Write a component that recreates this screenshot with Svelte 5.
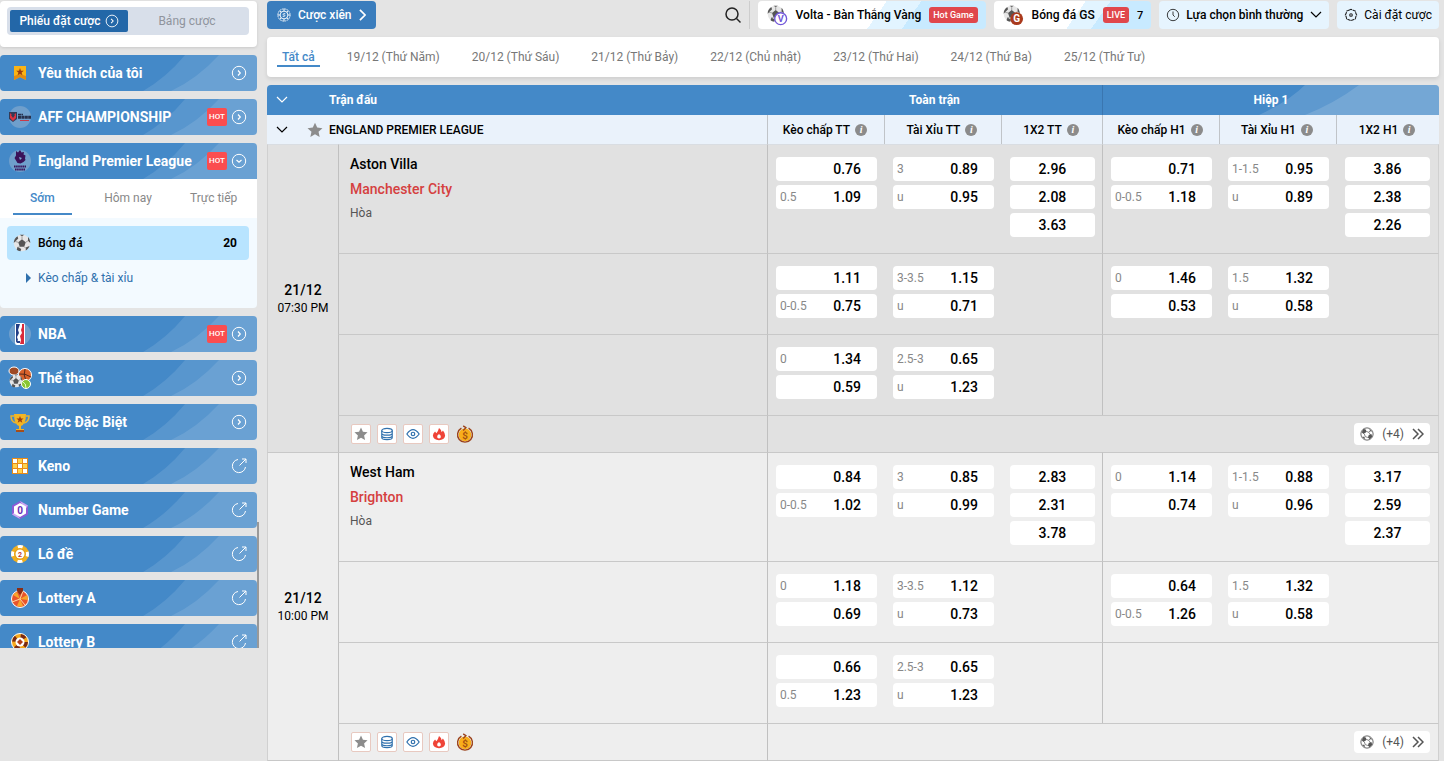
<script lang="ts">
	type Odd = [string, string];
	type Market = Odd[];

	const menuTop = [
		{ icon: 'bookmark', label: 'Yêu thích của tôi', end: 'right', hot: false },
		{ icon: 'aff', label: 'AFF CHAMPIONSHIP', end: 'right', hot: true },
		{ icon: 'epl', label: 'England Premier League', end: 'down', hot: true }
	];

	const menuRest = [
		{ icon: 'nba', label: 'NBA', end: 'right', hot: true },
		{ icon: 'sports', label: 'Thể thao', end: 'right', hot: false },
		{ icon: 'trophy', label: 'Cược Đặc Biệt', end: 'right', hot: false },
		{ icon: 'keno', label: 'Keno', end: 'out', hot: false },
		{ icon: 'number', label: 'Number Game', end: 'out', hot: false },
		{ icon: 'lode', label: 'Lô đề', end: 'out', hot: false },
		{ icon: 'lotteryA', label: 'Lottery A', end: 'out', hot: false },
		{ icon: 'lotteryB', label: 'Lottery B', end: 'out', hot: false }
	];

	const periods = ['Sớm', 'Hôm nay', 'Trực tiếp'];

	const dates = [
		'Tất cả',
		'19/12 (Thứ Năm)',
		'20/12 (Thứ Sáu)',
		'21/12 (Thứ Bảy)',
		'22/12 (Chủ nhật)',
		'23/12 (Thứ Hai)',
		'24/12 (Thứ Ba)',
		'25/12 (Thứ Tư)'
	];

	const columns = ['Kèo chấp TT', 'Tài Xỉu TT', '1X2 TT', 'Kèo chấp H1', 'Tài Xỉu H1', '1X2 H1'];

	const matches: { home: string; away: string; date: string; time: string; rows: Market[][] }[] = [
		{
			home: 'Aston Villa',
			away: 'Manchester City',
			date: '21/12',
			time: '07:30 PM',
			rows: [
				[
					[['', '0.76'], ['0.5', '1.09']],
					[['3', '0.89'], ['u', '0.95']],
					[['', '2.96'], ['', '2.08'], ['', '3.63']],
					[['', '0.71'], ['0-0.5', '1.18']],
					[['1-1.5', '0.95'], ['u', '0.89']],
					[['', '3.86'], ['', '2.38'], ['', '2.26']]
				],
				[
					[['', '1.11'], ['0-0.5', '0.75']],
					[['3-3.5', '1.15'], ['u', '0.71']],
					[],
					[['0', '1.46'], ['', '0.53']],
					[['1.5', '1.32'], ['u', '0.58']],
					[]
				],
				[[['0', '1.34'], ['', '0.59']], [['2.5-3', '0.65'], ['u', '1.23']], [], [], [], []]
			]
		},
		{
			home: 'West Ham',
			away: 'Brighton',
			date: '21/12',
			time: '10:00 PM',
			rows: [
				[
					[['', '0.84'], ['0-0.5', '1.02']],
					[['3', '0.85'], ['u', '0.99']],
					[['', '2.83'], ['', '2.31'], ['', '3.78']],
					[['0', '1.14'], ['', '0.74']],
					[['1-1.5', '0.88'], ['u', '0.96']],
					[['', '3.17'], ['', '2.59'], ['', '2.37']]
				],
				[
					[['0', '1.18'], ['', '0.69']],
					[['3-3.5', '1.12'], ['u', '0.73']],
					[],
					[['', '0.64'], ['0-0.5', '1.26']],
					[['1.5', '1.32'], ['u', '0.58']],
					[]
				],
				[[['', '0.66'], ['0.5', '1.23']], [['2.5-3', '0.65'], ['u', '1.23']], [], [], [], []]
			]
		}
	];

	let activePeriod = $state('Sớm');
	let activeDate = $state('Tất cả');
</script>

{#snippet ballShape()}
	<circle cx="12" cy="12" r="11" fill="#e6e6e6" />
	<path d="M12 7l5 4-2 6H9l-2-6zM1 12c0-4 2-7 5-9l1 3-4 4zM23 12l-3-3 0-5c2 2 3 5 3 8zM5 21l1-4 5 3-1 3c-2 0-4-1-5-2zM17 22l0-4 5-2c-1 3-3 5-5 6zM9 1h6l-3 2z" fill="#555" />
	<path d="M12 3v4M3 10l4 1M20 9l-3 2M15 17l2 2M9 17l-3 1" stroke="#888" fill="none" />
{/snippet}

{#snippet menuIcon(name: string)}
	<svg class="menu-icon" viewBox="0 0 24 24" aria-hidden="true">
		{#if name === 'bookmark'}
			<path d="M6 5h12v14l-6-3-6 3z" fill="#fbb415" />
			<path d="M6 15v4l6-3 6 3v-4l-6-2z" fill="#e28b12" />
			<path d="M12 7l1 2.700 2.800.100-2.200 1.800.800 2.700-2.400-1.500-2.400 1.500.800-2.700-2.200-1.800 2.800-.100z" fill="#9c3d10" />
		{:else if name === 'aff'}
			<circle cx="12" cy="12" r="11" fill="#6f9fcc" />
			<path d="M1 7h8v7l-4 3-4-3z" fill="#333b58" />
			<path d="M2 8l3 3 3-3v5l-3 3-3-3z" fill="#dd3340" />
			<path d="M3 10h4l-2 3z" fill="#333b58" />
			<path d="M10 9.500h5M10 11.500h13M10 13h13" stroke="#27304c" stroke-width="1.600" stroke-dasharray="3 .4" />
			<path d="M12 15.500h9" stroke="#c83a49" />
		{:else if name === 'epl'}
			<circle cx="12" cy="12" r="11" fill="#6f9fcc" />
			<path d="M8 2l2 1.500L12 1l1.500 2.500L16 3l-.5 2.500 2 1-.5 3 .5 1.500-2 2-3 1.500-3-.5L8 11.500 6.500 9 8 6.500z" fill="#3a1259" />
			<path d="M11 8l3 1-2 2z" fill="#7fa9d3" />
			<path d="M6 17.500h12M7 20.500h10" stroke="#3a1259" stroke-width="2" stroke-dasharray="1.600 .5" />
		{:else if name === 'nba'}
			<circle cx="12" cy="12" r="11" fill="#6f9fcc" />
			<rect x="7" y="1" width="10" height="22" rx="2" fill="#fff" />
			<path d="M8 2h4l-1 3-1 3 1 3-2 4 1 3-2 3z" fill="#233f86" />
			<path d="M14 2h2v20h-4l1-4-1-4 2-3-1-3 1-3z" fill="#d92a3b" />
			<path d="M9 20h3" stroke="#233f86" stroke-width="2" />
		{:else if name === 'sports'}
			<ellipse cx="6" cy="5" rx="5" ry="4" fill="#9e4a25" stroke="#fff" />
			<circle cx="17" cy="9" r="6.500" fill="#d9622b" stroke="#fff" />
			<path d="M11 8q6-1 12 3M17 3q-2 6 1 12" stroke="#54291b" fill="none" />
			<g transform="translate(1 8) scale(.58)">{@render ballShape()}</g>
			<circle cx="18" cy="18" r="4.500" fill="#87c532" stroke="#fff" />
			<path d="M15 16q3 1 3 6" stroke="#e8ffc0" fill="none" />
		{:else if name === 'trophy'}
			<path d="M6 6H3q0 6 5 7M18 6h3q0 6-5 7" stroke="#eab32d" stroke-width="1.500" fill="none" />
			<path d="M6 4h12q0 10-5 12v3h3v2H8v-2h3v-3Q6 14 6 4z" fill="#f4b522" />
			<path d="M8 20h8v2H8z" fill="#a64d18" />
			<path d="M12 6l1 2.500h2.500l-2 1.700.800 2.600-2.300-1.500-2.300 1.500.8-2.600-2-1.700H11z" fill="#9c3d10" />
		{:else if name === 'keno'}
			<rect x="4" y="4" width="16" height="16" fill="#e88c18" />
			{#each [5, 10, 15] as x, i}
				{#each [5, 10, 15] as y, j}
					<rect {x} {y} width="4" height="4" fill={(i + j) % 2 ? '#ffd34d' : '#fff'} />
				{/each}
			{/each}
		{:else if name === 'number'}
			<path d="M12 3l8 4.500v9L12 21l-8-4.500v-9z" fill="#8d5bd6" />
			<path d="M12 3l8 4.500-3 4.500zM4 16.500l4-3.500 4 8z" fill="#c9a9f2" />
			<path d="M12 5l6 3.500v7L12 19l-6-3.500v-7z" fill="#fff" />
			<text x="12" y="15.500" text-anchor="middle" font-size="10" font-weight="700" fill="#6b2fb5">0</text>
		{:else if name === 'lode'}
			<circle cx="12" cy="12" r="9" fill="#f0ae1f" />
			<circle cx="12" cy="12" r="7.500" fill="none" stroke="#fff" stroke-width="3" stroke-dasharray="5 6.780" stroke-dashoffset="2.500" />
			<circle cx="12" cy="12" r="5.500" fill="#e39c14" />
			<circle cx="12" cy="12" r="4.500" fill="#fff" />
			<text x="12" y="15" text-anchor="middle" font-size="7" font-weight="700" fill="#c0392b">2</text>
		{:else if name === 'lotteryA'}
			<circle cx="12" cy="13" r="8.500" fill="#e8542c" stroke="#fff" />
			<path d="M12 13L5 9a8 8 0 0 1 4-3zM12 13l7-4a8 8 0 0 1 1 5zM12 13l3 7a8 8 0 0 1-6 0z" fill="#f7a52b" />
			<path d="M12 13l-8 3M12 13l5 6M12 13l3-8" stroke="#ffd9a0" />
			<path d="M9 2h6v3l-3 4-3-4z" fill="#8a2d14" />
		{:else}
			<circle cx="12" cy="12" r="8.500" fill="#f6a81c" stroke="#fff" />
			<circle cx="12" cy="12" r="6" fill="none" stroke="#7a2b12" stroke-width="4" stroke-dasharray="4.700 4.720" />
			<circle cx="12" cy="12" r="4.500" fill="#fff" />
			<path d="M12 9l3 3-3 3-3-3z" fill="#b23c16" />
		{/if}
	</svg>
{/snippet}

{#snippet endIcon(kind: string)}
	<svg class="end-icon" viewBox="0 0 16 16" fill="none" stroke="currentColor" aria-hidden="true">
		{#if kind === 'out'}
			<path d="M7 1.500A6.600 6.600 0 1 0 14.500 9M8.500 7.500L15 1M11 1h4v4" />
		{:else}
			<circle cx="8" cy="8" r="6.700" />
			<path d={kind === 'down' ? 'M5.500 7L8 9.300 10.500 7' : 'M7 5.500L9.300 8 7 10.500'} stroke-width="1.200" />
		{/if}
	</svg>
{/snippet}

{#snippet chevron()}
	<svg class="chevron" viewBox="0 0 12 8" fill="none" stroke="currentColor" stroke-width="1.200" aria-hidden="true">
		<path d="M1 1l5 5 5-5" />
	</svg>
{/snippet}

{#snippet star()}
	<svg class="star" viewBox="0 0 24 24" fill="#8c8c8c" aria-hidden="true">
		<path d="M12 1l3.300 7.300 7.900.900-5.900 5.300 1.700 7.900-7-4-7 4 1.700-7.900L.8 9.200l7.900-.9z" />
	</svg>
{/snippet}

{#snippet menuItem(item: { icon: string; label: string; end: string; hot: boolean }, open: boolean)}
	<button class="menu-item" class:open>
		{@render menuIcon(item.icon)}
		<span class="menu-label">{item.label}</span>
		{#if item.hot}<span class="hot">HOT</span>{/if}
		{@render endIcon(item.end)}
	</button>
{/snippet}

<div class="page">
	<aside class="sidebar">
		<div class="slip-card">
			<div class="segmented">
				<button class="segment active">Phiếu đặt cược {@render endIcon('right')}</button>
				<button class="segment">Bảng cược</button>
			</div>
		</div>

		<nav class="menu">
			{#each menuTop as item (item.label)}
				{@render menuItem(item, item.end === 'down')}
			{/each}
			<div class="panel">
				<div class="periods">
					{#each periods as period (period)}
						<button class:active={period === activePeriod} onclick={() => (activePeriod = period)}>{period}</button>
					{/each}
				</div>
				<a class="sport" href="#football">
					<svg viewBox="0 0 24 24" aria-hidden="true">{@render ballShape()}</svg>
					<span>Bóng đá</span>
					<span class="count">20</span>
				</a>
				<a class="sub-link" href="#handicap">Kèo chấp &amp; tài xỉu</a>
			</div>
			{#each menuRest as item (item.label)}
				{@render menuItem(item, false)}
			{/each}
			<span class="scroll-thumb"></span>
		</nav>
	</aside>

	<main class="content">
		<div class="toolbar">
			<button class="parlay">
				<svg viewBox="0 0 16 16" fill="none" stroke="currentColor" aria-hidden="true">
					<circle cx="8" cy="8" r="7" stroke-dasharray="2 .7" />
					<circle cx="8" cy="8" r="4.500" />
					<path d="M8 1v3M8 12v3M1 8h3M12 8h3M3 3l2 2M11 11l2 2M13 3l-2 2M3 13l2-2M9.500 6.500h-2q-1 .8 0 1.500h1q1 .8 0 1.500h-2" />
				</svg>
				Cược xiên
				<svg class="next" viewBox="0 0 8 14" fill="none" stroke="currentColor" stroke-width="2" aria-hidden="true"><path d="M1 1l6 6-6 6" /></svg>
			</button>
			<button class="search" aria-label="Tìm kiếm">
				<svg viewBox="0 0 18 18" fill="none" stroke="#222" stroke-width="1.500" aria-hidden="true"><circle cx="8" cy="8" r="6" /><path d="M12.500 12.500l4 4" /></svg>
			</button>
			<button class="promo">
				<svg viewBox="0 0 24 24" aria-hidden="true">
					<g transform="translate(1 1) scale(.8)">{@render ballShape()}</g>
					<circle cx="16" cy="16" r="6.500" fill="#fff" stroke="#7257d8" stroke-width="1.500" />
					<text x="16" y="20" text-anchor="middle" font-size="10" font-weight="700" fill="#7257d8">V</text>
				</svg>
				Volta - Bàn Thắng Vàng
				<span class="tag">Hot Game</span>
			</button>
			<button class="promo">
				<svg viewBox="0 0 24 24" aria-hidden="true">
					<g transform="translate(1 1) scale(.8)">{@render ballShape()}</g>
					<circle cx="16" cy="16" r="7" fill="#a93a1d" />
					<text x="16" y="20" text-anchor="middle" font-size="11" font-weight="700" fill="#fff">G</text>
				</svg>
				Bóng đá GS
				<span class="tag">LIVE</span>
				<span class="live-count">7</span>
			</button>
			<label class="sorter">
				<svg viewBox="0 0 16 16" fill="none" stroke="#222" aria-hidden="true"><circle cx="8" cy="8" r="6.500" /><path d="M8 4v4l2 2" /></svg>
				<select aria-label="Sắp xếp">
					<option>Lựa chọn bình thường</option>
				</select>
				{@render chevron()}
			</label>
			<button class="settings">
				<svg viewBox="0 0 16 16" fill="none" stroke="#222" stroke-width="1.200" aria-hidden="true">
					<path d="M5.500 2.500L8 1.500l2.500 1 2.500 1 .5 2.500 1 2-1 2-.5 2.500-2.500 1-2.500 1-2.500-1-2.500-1L2.500 10l-1-2 1-2L3 3.500z" stroke-dasharray="4 .7" />
					<circle cx="8" cy="8" r="1.500" />
				</svg>
				Cài đặt cược
			</button>
		</div>

		<div class="dates">
			{#each dates as date (date)}
				<button class:active={date === activeDate} onclick={() => (activeDate = date)}>{date}</button>
			{/each}
		</div>

		<table class="odds">
			<colgroup>
				<col class="c-time" />
				<col />
				<col class="c-line" />
				<col class="c-line" />
				<col class="c-win" />
				<col class="c-line" />
				<col class="c-line" />
				<col class="c-win-last" />
			</colgroup>
			<thead>
				<tr class="groups">
					<th colspan="2"><div class="lead">{@render chevron()}<span class="lead-text">Trận đấu</span></div></th>
					<th colspan="3">Toàn trận</th>
					<th class="half" colspan="3">Hiệp 1</th>
				</tr>
				<tr class="markets">
					<th colspan="2">
						<div class="lead">{@render chevron()}{@render star()}<span class="league">ENGLAND PREMIER LEAGUE</span></div>
					</th>
					{#each columns as column (column)}
						<th class="market">
							<span class="market-name">{column}<i class="info">i</i></span>
						</th>
					{/each}
				</tr>
			</thead>
			{#each matches as match (match.home)}
				<tbody>
					{#each match.rows as row, r}
						<tr class="line" class:first={r === 0}>
							{#if r === 0}
								<td class="when" rowspan="4"><b>{match.date}</b>{match.time}</td>
							{/if}
							<td class="teams">
								{#if r === 0}
									<div class="home">{match.home}</div>
									<div class="away">{match.away}</div>
									<div class="draw">Hòa</div>
								{/if}
							</td>
							{#each row as market, m}
								<td class="prices" class:half={m % 3 === 0}>
									{#each market as [line, price]}
										<button class="price" class:single={m % 3 === 2}>
											<span class="handicap">{line}</span>{price}
										</button>
									{/each}
								</td>
							{/each}
						</tr>
					{/each}
					<tr class="tools-row">
						<td class="edge">
							<div class="tools">
								<button class="tool" aria-label="Yêu thích">{@render star()}</button>
								<button class="tool" aria-label="Thống kê">
									<svg viewBox="0 0 16 16" fill="none" stroke="#2f70ad" stroke-width="1.300" aria-hidden="true">
										<ellipse cx="8" cy="4" rx="6" ry="2.500" />
										<path d="M2 4v8c0 3.300 12 3.300 12 0V4M2 7c0 3 12 3 12 0M2 10c0 3 12 3 12 0" />
									</svg>
								</button>
								<button class="tool" aria-label="Theo dõi">
									<svg viewBox="0 0 16 16" fill="none" stroke="#2f70ad" stroke-width="1.400" aria-hidden="true"><path d="M1 8q7-10 14 0-7 10-14 0z" /><circle cx="8" cy="8" r="2" /></svg>
								</button>
								<button class="tool" aria-label="Nổi bật">
									<svg viewBox="0 0 16 16" fill="#ef4438" aria-hidden="true"><path d="M8 1q3 2 3 5l1.500-2Q15 7 15 10q-1 5-7 5t-7-5q0-3 2.500-5L5 7q2-2 3-6z" /><path d="M8 8q3 2 2 4-2 2-4 0-1-2 2-4z" fill="#fff" /></svg>
								</button>
								<button class="tool coin" aria-label="Cash out">
									<svg viewBox="0 0 20 20" aria-hidden="true">
										<circle cx="10" cy="11" r="7" fill="#f9ae1b" />
										<path d="M6 3.500A8.300 8.300 0 1 0 14 3.500M8 1l3 2-3 3" stroke="#9b421b" stroke-width="1.500" fill="none" />
										<text x="10" y="15" text-anchor="middle" font-size="11" font-weight="700" fill="#a65210">$</text>
									</svg>
								</button>
							</div>
						</td>
						<td class="edge" colspan="6">
							<button class="more">
								<svg viewBox="0 0 16 16" fill="none" stroke="#555" aria-hidden="true">
									<circle cx="8" cy="8" r="7" />
									<path d="M4 2l3 1v3L4 8 2 6zM10 9l3-1 1 3-3 3-2-2zM2 11l3 0 1 3zM10 2l4 3-2 0z" fill="#555" stroke="none" />
									<path d="M7 5l3 1 2 3M5 8l1 3 3 1M12 4l-2 2" stroke-width=".8" />
								</svg>
								<span>(+4)</span>
								<svg class="double" viewBox="0 0 12 12" fill="none" stroke="#555" stroke-width="1.500" aria-hidden="true"><path d="M1 1l5 5-5 5M6 1l5 5-5 5" /></svg>
							</button>
						</td>
					</tr>
				</tbody>
			{/each}
		</table>
	</main>
</div>

<style>
	:global(body) {
		background: #e4e4e4;
		overflow: hidden;
	}

	.page {
		--blue: #4489c8;
		display: grid;
		grid-template-columns: 257px minmax(0, 1fr);
		gap: 10px;
		height: 100vh;
		overflow: hidden;
		padding: 1px 5px 0 0;
		box-sizing: border-box;
		font-family: Roboto, sans-serif;
		font-size: 12px;
		color: #000;
	}

	button,
	select {
		font: inherit;
		color: inherit;
		border: 0;
		padding: 0;
		background: none;
		cursor: pointer;
		white-space: nowrap;
	}

	a {
		text-decoration: none;
	}

	svg {
		display: block;
		flex: none;
	}

	.slip-card {
		height: 46px;
		padding: 6px 8px 12px 7px;
		box-sizing: border-box;
		background: #fff;
		border-radius: 4px;
		box-shadow: 0 1px 3px rgba(0, 0, 0, 0.12);
	}

	.segmented {
		display: flex;
		height: 28px;
		padding: 3px;
		box-sizing: border-box;
		background: #d8dfea;
		border-radius: 4px;
	}

	.segment {
		flex: 1;
		display: flex;
		align-items: center;
		justify-content: center;
		gap: 4px;
		font-size: 12px;
		color: #8f949d;
	}

	.segment.active {
		background: #2367a8;
		border-radius: 2px;
		color: #fff;
		font-weight: 500;
	}

	.segment .end-icon {
		width: 14px;
		height: 14px;
	}

	.menu {
		position: relative;
		display: flex;
		flex-direction: column;
		gap: 8px;
		height: calc(100vh - 168px);
		margin: 8px -2px 0 0;
		padding-right: 2px;
		overflow: hidden;
	}

	.menu-item {
		flex: none;
		display: flex;
		align-items: center;
		height: 36px;
		padding: 0 10px 0 8px;
		border-radius: 4px;
		color: #fff;
		background: var(--blue) url("data:image/svg+xml,%3Csvg xmlns='http://www.w3.org/2000/svg' width='114' height='36' fill='%23fff' fill-opacity='.11'%3E%3Cpath d='M0 36Q24 22 42 0H114V36z'/%3E%3Cpath d='M28 36Q54 24 76 0H114V36z'/%3E%3C/svg%3E") right center no-repeat;
	}

	.menu-item.open {
		border-radius: 4px 4px 0 0;
		margin-bottom: -8px;
	}

	.menu-icon {
		width: 24px;
		height: 24px;
	}

	.menu-label {
		flex: 1;
		padding-left: 6px;
		text-align: left;
		font-size: 14px;
		font-weight: 700;
	}

	.hot {
		width: 20px;
		margin-right: 4px;
		border-radius: 2px;
		background: #fb4d4f;
		font-size: 8px;
		line-height: 18px;
		font-weight: 500;
		text-align: center;
	}

	.end-icon {
		width: 16px;
		height: 16px;
	}

	.panel {
		flex: none;
		height: 129px;
		background: #f3faff;
		border-radius: 0 0 4px 4px;
	}

	.periods {
		display: grid;
		grid-template-columns: 1fr 1fr 1fr;
		height: 39px;
		background: #fff;
	}

	.periods button {
		height: 36px;
		margin: 0 14px 0 13px;
		padding-top: 4px;
		box-sizing: border-box;
		border-bottom: 2px solid transparent;
		color: #888;
	}

	.periods .active {
		border-color: var(--blue);
		color: var(--blue);
		font-weight: 500;
	}

	.sport {
		display: flex;
		align-items: center;
		height: 34px;
		margin: 8px 8px 8px 7px;
		padding: 0 12px 0 6px;
		border-radius: 4px;
		background: #b8e4ff;
		color: #000;
		font-weight: 500;
	}

	.sport svg {
		width: 18px;
		height: 18px;
		margin-right: 7px;
	}

	.count {
		margin-left: auto;
		font-weight: 700;
	}

	.sub-link {
		display: flex;
		align-items: center;
		height: 20px;
		margin-left: 26px;
		color: #2f70ad;
	}

	.sub-link::before {
		content: '';
		margin-right: 7px;
		border: solid transparent;
		border-width: 5px 0 5px 5px;
		border-left-color: #2f70ad;
	}

	.scroll-thumb {
		position: absolute;
		right: 0;
		bottom: 0;
		width: 2px;
		height: 126px;
		background: #999;
	}

	.toolbar {
		display: flex;
		gap: 8px;
		height: 28px;
		font-weight: 500;
	}

	.toolbar > * {
		display: flex;
		align-items: center;
		border-radius: 4px;
	}

	.parlay {
		gap: 7px;
		padding: 0 10px;
		background: #3a7dbd;
		color: #fff;
	}

	.toolbar svg {
		width: 14px;
		height: 14px;
	}

	.toolbar svg.next {
		width: 7px;
		height: 12px;
	}

	.toolbar .search {
		margin-left: auto;
		padding-right: 7px;
		border-right: 1px solid #cdcdcd;
		border-radius: 0;
	}

	.toolbar .search svg {
		width: 18px;
		height: 18px;
	}

	.promo {
		gap: 8px;
		padding: 0 8px;
		background: linear-gradient(125deg, #fff 52%, #e2f4ff 52%, #e2f4ff 66%, #c8eaff 66%);
	}

	.toolbar .promo svg {
		width: 22px;
		height: 22px;
	}

	.tag {
		padding: 0 4px;
		border-radius: 3px;
		background: #e0474c;
		color: #fff;
		font-size: 9px;
		line-height: 16px;
		font-weight: 500;
	}

	.live-count {
		font-size: 11px;
	}

	.sorter,
	.settings {
		gap: 6px;
		padding: 0 7px;
		background: #e6f4fe;
	}

	.sorter select {
		appearance: none;
		outline: 0;
	}

	.settings {
		font-weight: 400;
	}

	.toolbar .chevron,
	.chevron {
		width: 12px;
		height: 8px;
	}

	.dates {
		display: flex;
		align-items: center;
		gap: 32px;
		height: 40px;
		margin: 8px 0;
		padding: 0 10px;
		border-radius: 4px;
		background: #fff;
		box-shadow: 0 2px 4px rgba(0, 0, 0, 0.1);
	}

	.dates button {
		height: 20px;
		padding-top: 2px;
		color: #777;
		border-bottom: 2px solid transparent;
	}

	.dates .active {
		padding: 2px 5px 0;
		margin-right: -5px;
		color: var(--blue);
		border-color: var(--blue);
		font-weight: 500;
	}

	.odds {
		width: 100%;
		table-layout: fixed;
		border-collapse: separate;
		border-spacing: 0;
	}

	.c-time {
		width: 71px;
	}

	.c-line {
		width: 117px;
	}

	.c-win {
		width: 101px;
	}

	.c-win-last {
		width: 103px;
	}

	th,
	td {
		box-sizing: border-box;
		padding: 0;
	}

	.groups th {
		height: 30px;
		background: var(--blue);
		color: #fff;
		font-weight: 700;
	}

	.groups th:first-child {
		border-top-left-radius: 4px;
	}

	.groups .half {
		border-left: 1px solid #3a76b0;
		border-top-right-radius: 4px;
		background: var(--blue) url("data:image/svg+xml,%3Csvg xmlns='http://www.w3.org/2000/svg' width='180' height='30' fill='%23fff' fill-opacity='.14'%3E%3Cpath d='M0 30Q30 16 46 0H180V30z'/%3E%3Cpath d='M46 30Q76 18 100 0H180V30z'/%3E%3C/svg%3E") right center no-repeat;
	}

	.markets th {
		height: 29px;
		background: #eaf2fb;
		font-weight: 500;
	}

	.markets .market {
		border-left: 1px solid #c0c4c8;
	}

	.lead {
		display: flex;
		align-items: center;
		padding-left: 9px;
	}

	.lead-text {
		margin-left: 41px;
	}

	.lead .star {
		width: 16px;
		height: 16px;
		margin: 0 6px 0 19px;
	}

	.market-name {
		display: flex;
		align-items: center;
		justify-content: center;
		gap: 5px;
		padding-right: 2px;
	}

	.info {
		width: 12px;
		border-radius: 6px;
		background: #8b8b8b;
		color: #fff;
		font: italic 700 10px/12px 'Liberation Serif', serif;
	}

	tbody td {
		border-top: 1px solid #c8c8c8;
		background: #e1e1e1;
	}

	thead + tbody .first td {
		border-top-color: #d9dde2;
	}

	tbody:last-child td {
		background: #eee;
	}

	tbody:last-child .tools-row td,
	tbody:last-child .when {
		border-bottom: 1px solid #c8c8c8;
	}

	.line td {
		height: 81px;
		vertical-align: top;
	}

	.line.first td {
		height: 109px;
	}

	.line .when {
		vertical-align: middle;
		border-left: 1px solid #d0d0d0;
		text-align: center;
		line-height: 18px;
	}

	.when b {
		display: block;
		font-size: 14px;
		font-weight: 500;
	}

	.line .teams {
		padding: 7px 12px 0 11px;
		border-left: 1px solid #c0c0c0;
		font-size: 14px;
		line-height: 25px;
		font-weight: 500;
	}

	.away {
		color: #d5403f;
	}

	.draw {
		color: #555;
		font-size: 12px;
		line-height: 23px;
		font-weight: 400;
	}

	.prices {
		padding: 12px 7px 0 9px;
	}

	.prices.half,
	.edge {
		border-left: 1px solid #c0c0c0;
	}

	.prices.half {
		padding-left: 8px;
	}

	.prices:last-child,
	.edge:last-child {
		border-right: 1px solid #d0d0d0;
	}

	.prices:last-child {
		padding-right: 8px;
	}

	.price {
		display: flex;
		align-items: center;
		justify-content: space-between;
		width: 100%;
		height: 24px;
		margin-bottom: 4px;
		padding: 0 16px 0 4px;
		border-radius: 4px;
		background: #fff;
		color: #000;
		font-size: 14px;
		font-weight: 500;
	}

	.price.single {
		justify-content: center;
		padding: 0;
	}

	.handicap {
		color: #888;
		font-size: 12px;
		font-weight: 400;
	}

	.tools-row td {
		height: 37px;
	}

	tbody:last-child .tools-row td {
		height: 38px;
	}

	.tools {
		display: flex;
		align-items: center;
		gap: 6px;
		padding-left: 12px;
	}

	.tool {
		display: grid;
		place-items: center;
		width: 20px;
		height: 20px;
		box-sizing: border-box;
		border: 1px solid #e8c9c0;
		border-radius: 2px;
		background: #fff;
	}

	.tool svg {
		width: 14px;
		height: 14px;
	}

	.tool.coin {
		border: 0;
		background: none;
	}

	.coin svg {
		width: 18px;
		height: 18px;
	}

	.more {
		display: flex;
		align-items: center;
		gap: 8px;
		height: 22px;
		margin: 0 8px 0 auto;
		padding: 0 6px;
		border-radius: 4px;
		background: #fff;
		color: #555;
	}

	.more svg {
		width: 14px;
		height: 14px;
	}

	.more svg.double {
		width: 12px;
		height: 12px;
	}
</style>
